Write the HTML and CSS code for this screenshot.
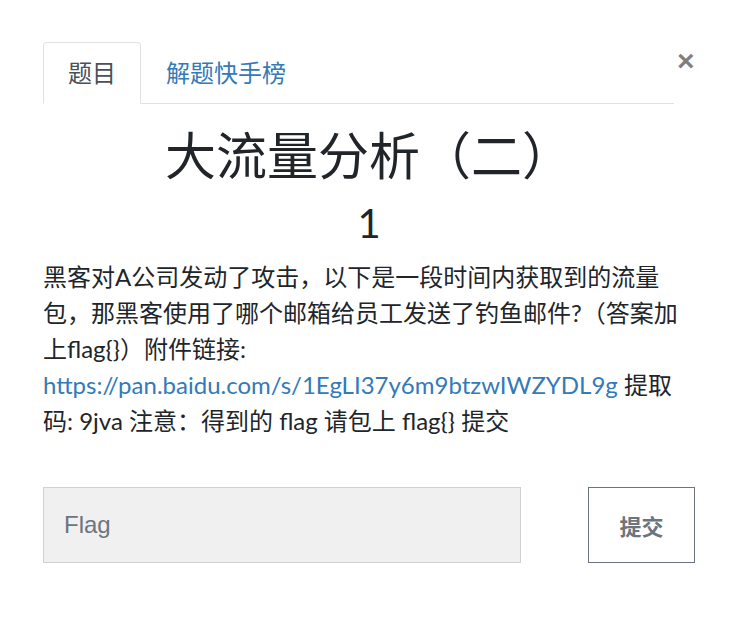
FILE: index.html
```html
<!DOCTYPE html>
<html lang="zh">
<head>
<meta charset="utf-8">
<link rel="stylesheet" href="styles.css">
</head>
<body>
<div class="modal">
  <div class="head">
    <ul class="tabs">
      <li class="tab active">题目</li>
      <li class="tab link">解题快手榜</li>
    </ul>
    <span class="close">&times;</span>
  </div>
  <h3 class="title">大流量分析（二）</h3>
  <h4 class="value">1</h4>
  <p class="desc">黑客对A公司发动了攻击，以下是一段时间内获取到的流量包，那黑客使用了哪个邮箱给员工发送了钓鱼邮件?（答案加上flag{}）附件链接: <a href="#">https://pan.baidu.com/s/1EgLI37y6m9btzwIWZYDL9g</a> 提取码: 9jva 注意：得到的 flag 请包上 flag{} 提交</p>
  <div class="form">
    <input class="flag" type="text" placeholder="Flag">
    <button class="submit">提交</button>
  </div>
</div>
</body>
</html>
```
FILE: styles.css
```css
html, body {
  margin: 0;
  padding: 0;
  background: #fff;
}
body {
  font-family: Lato, "Noto Sans CJK SC", sans-serif;
  color: #212529;
}
.modal {
  width: 652px;
  margin-left: 43px;
  padding-top: 42px;
}
.head {
  display: flex;
  align-items: flex-start;
}
.tabs {
  list-style: none;
  margin: 0;
  padding: 0;
  display: flex;
  width: 631px;
  border-bottom: 1px solid #dee2e6;
}
.tab {
  font-size: 24px;
  line-height: 36px;
  padding: 12px 24px;
  margin-bottom: -1px;
  border: 1px solid transparent;
  border-radius: 4px 4px 0 0;
}
.tab.active {
  color: #495057;
  border-color: #dee2e6 #dee2e6 #fff;
  background: #fff;
}
.tab.link {
  color: #337ab7;
}
.close {
  margin-left: 3px;
  margin-top: 4px;
  font-family: "Liberation Sans", sans-serif;
  font-size: 30px;
  font-weight: bold;
  line-height: 30px;
  color: #000;
  opacity: 0.5;
}
.title {
  margin: 22px 0 0;
  text-align: center;
  font-size: 51px;
  font-weight: 400;
  line-height: 60px;
}
.value {
  margin: 13px 0 0;
  text-align: center;
  font-size: 40px;
  font-weight: 400;
  line-height: 48px;
}
.desc {
  margin: 12px 0 0;
  font-size: 24px;
  line-height: 36px;
}
.desc a {
  color: #337ab7;
  text-decoration: none;
}
.form {
  display: flex;
  justify-content: space-between;
  margin-top: 48px;
}
.flag {
  box-sizing: border-box;
  width: 478px;
  height: 76px;
  margin: 0;
  padding: 0 20px;
  background: #f0f0f0;
  border: 1px solid #d2d2d2;
  border-radius: 0;
  font-family: "Liberation Sans", sans-serif;
  font-size: 24px;
  color: #495057;
  outline: none;
}
.flag::placeholder {
  color: #6c757d;
}
.submit {
  box-sizing: border-box;
  width: 107px;
  height: 76px;
  margin: 0;
  background: #fff;
  border: 1px solid #6c757d;
  border-radius: 0;
  font-family: "Noto Sans CJK SC", sans-serif;
  font-size: 22px;
  font-weight: bold;
  color: #6c757d;
}
```
